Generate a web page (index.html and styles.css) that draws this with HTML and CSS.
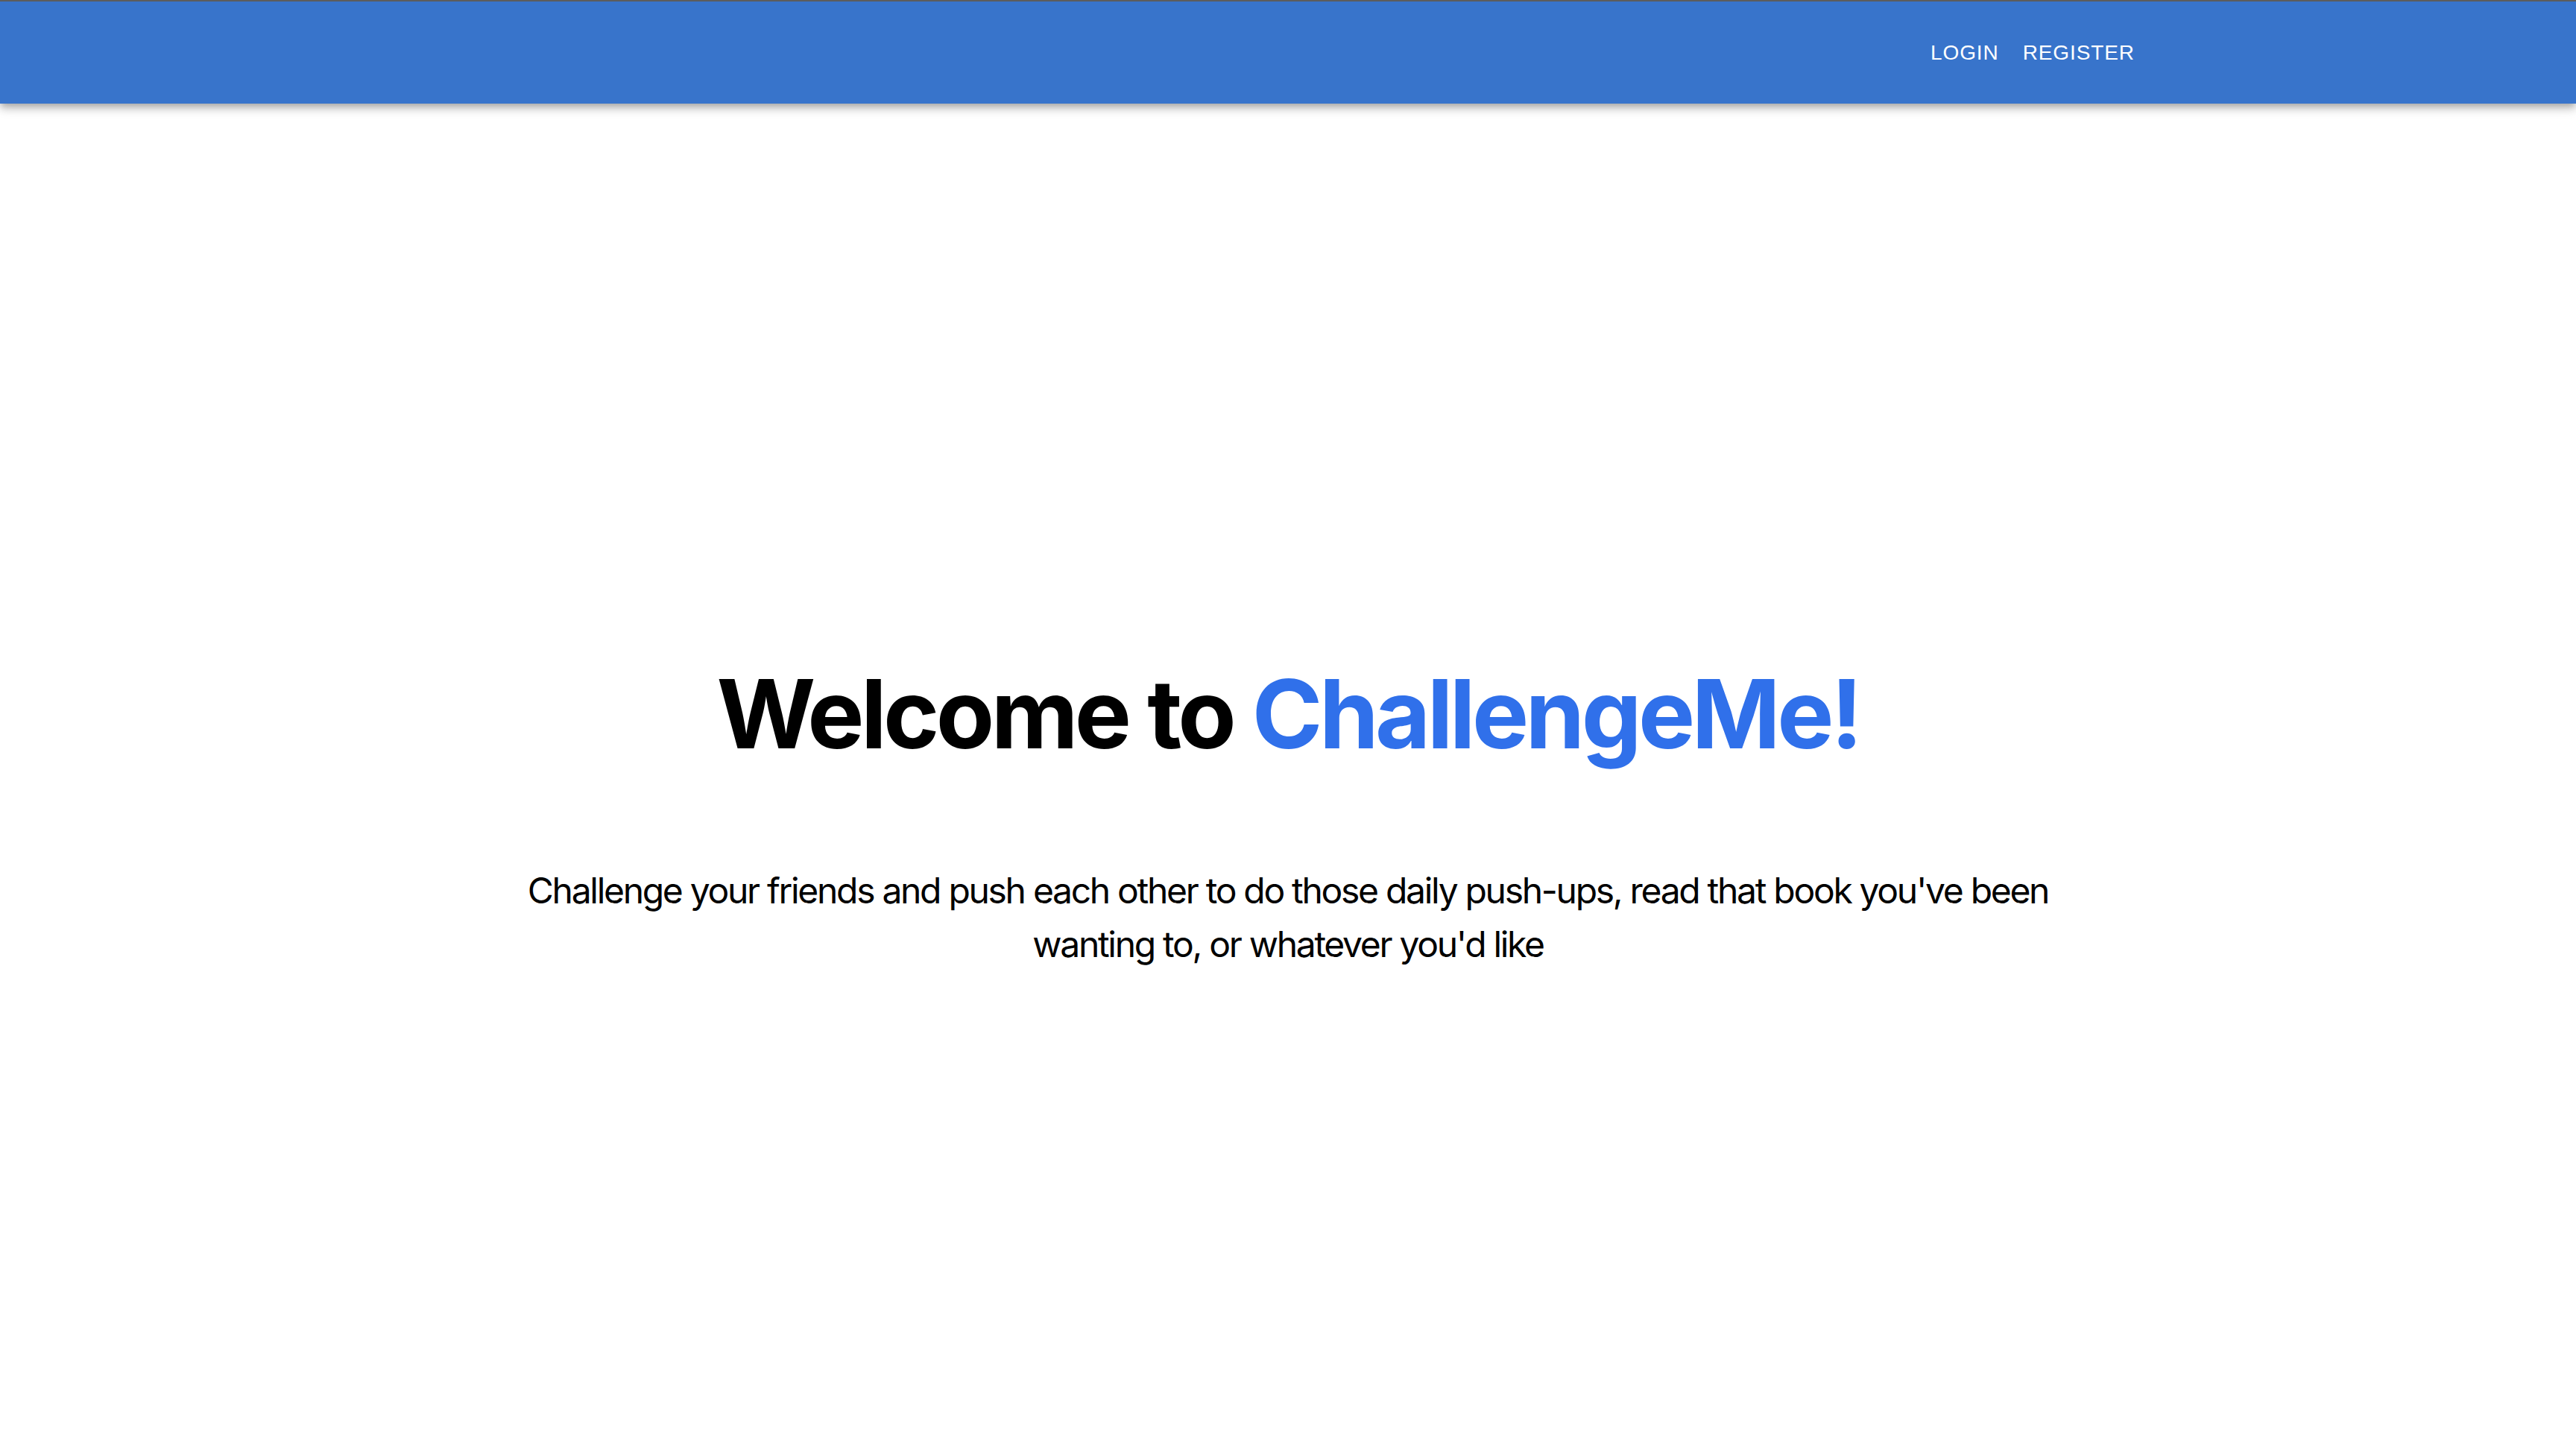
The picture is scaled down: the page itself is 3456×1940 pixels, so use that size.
FILE: index.html
```html
<!DOCTYPE html>
<html lang="en">
<head>
<meta charset="utf-8">
<title>ChallengeMe</title>
<link rel="stylesheet" href="styles.css">
</head>
<body>
<header class="appbar">
  <div class="container">
    <nav class="nav">
      <a class="nav-btn" href="#">Login</a>
      <a class="nav-btn" href="#">Register</a>
    </nav>
  </div>
</header>
<main class="hero">
  <h1 class="title">Welcome to <span class="brand">ChallengeMe!</span></h1>
  <p class="lead">Challenge your friends and push each other to do those daily push-ups, read that book you've been wanting to, or whatever you'd like</p>
</main>
</body>
</html>
```
FILE: styles.css
```css
html, body {
  margin: 0;
  padding: 0;
  background: #ffffff;
}
body {
  font-family: Inter, "Noto Sans", "Liberation Sans", sans-serif;
  color: #000;
}
.appbar {
  position: relative;
  z-index: 2;
  height: 137px;
  border-top: 2px solid #5c5c5c;
  background: #3874cb;
  box-shadow: 0 4px 8px -2px rgba(0,0,0,0.2), 0 8px 10px 0 rgba(0,0,0,0.14), 0 2px 20px 0 rgba(0,0,0,0.12);
}
.container {
  max-width: 2400px;
  margin: 0 auto;
  padding: 0 48px;
  height: 100%;
  box-sizing: border-box;
  display: flex;
  align-items: center;
  justify-content: flex-end;
}
.nav {
  display: flex;
  align-items: center;
}
.nav-btn {
  font-family: "Liberation Sans", Arial, sans-serif;
  font-size: 28px;
  text-transform: uppercase;
  letter-spacing: 0.9px;
  color: #ffffff;
  text-decoration: none;
  padding: 12px 16px;
  line-height: 1.75;
}
.hero {
  padding-top: 742px;
  text-align: center;
}
.title {
  margin: 0;
  font-size: 128px;
  font-weight: 700;
  line-height: 1.2;
  letter-spacing: -4.6px;
}
.brand {
  color: #3070ea;
}
.lead {
  margin: 124px auto 0;
  max-width: 2110px;
  font-size: 48px;
  line-height: 72px;
  letter-spacing: -2.3px;
}
```
